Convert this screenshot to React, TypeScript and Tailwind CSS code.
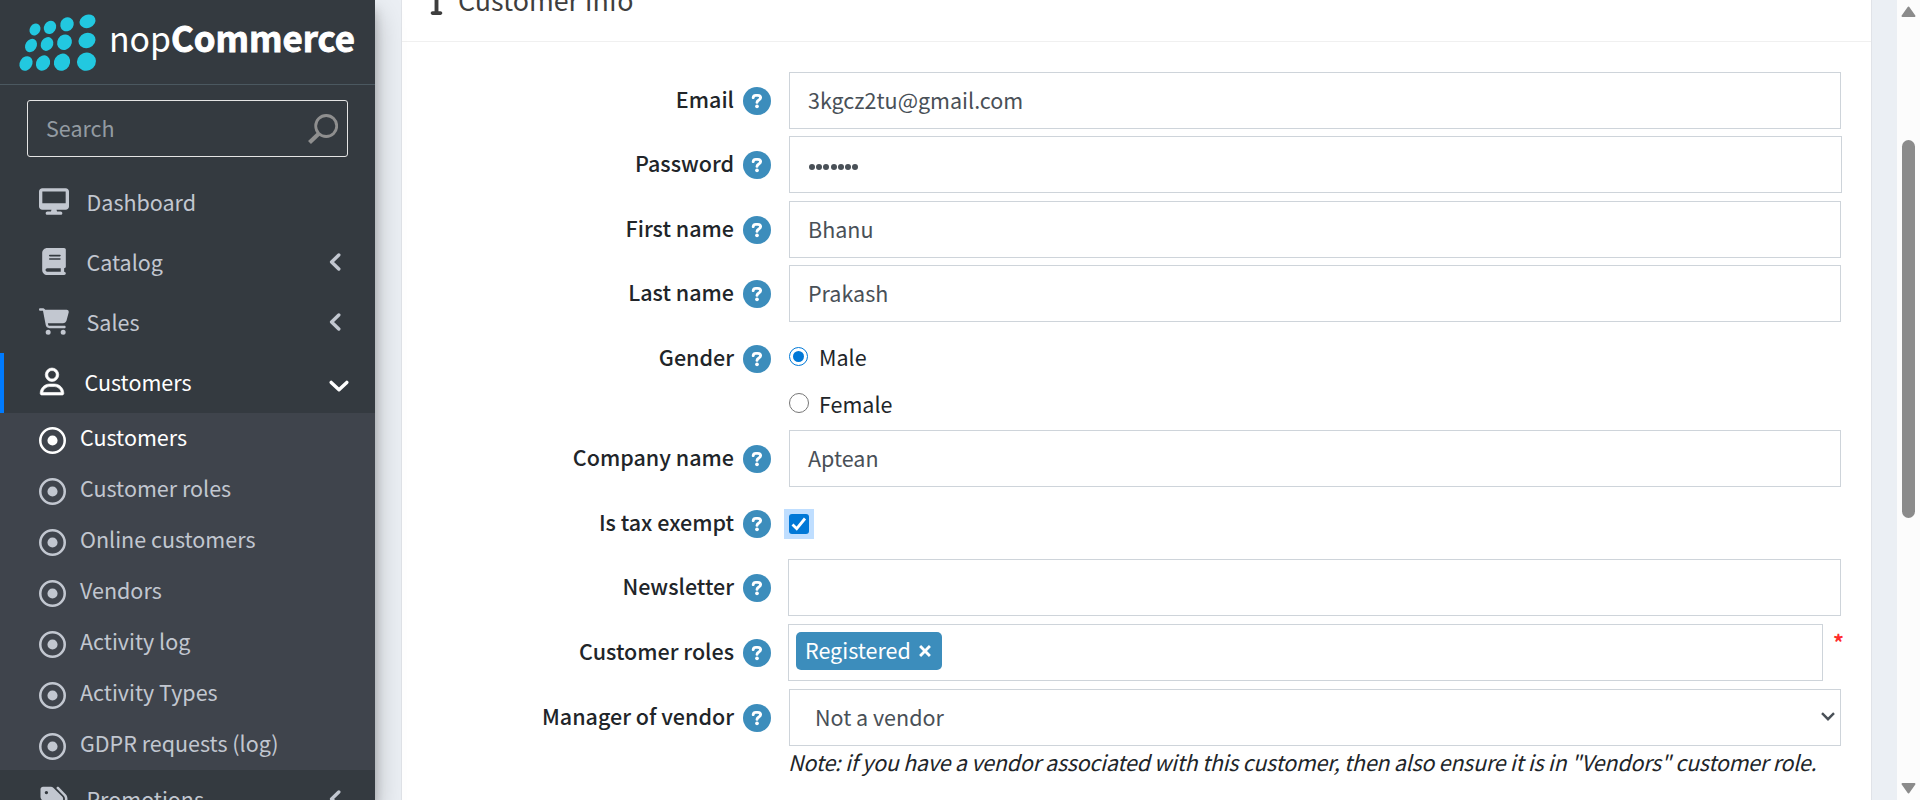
import type { ComponentType, ReactNode } from "react";
import {
  FaBook,
  FaCartShopping,
  FaDesktop,
  FaInfo,
  FaRegCircleDot,
  FaRegUser,
  FaTags,
} from "react-icons/fa6";

type IconType = ComponentType<{ className?: string }>;

const logoDots: [number, number, number, number][] = [
  [35, 29.5, 5.2, 6.3],
  [50, 27.3, 5.9, 6.9],
  [67, 24.3, 6.6, 7.2],
  [87.5, 21.3, 8.2, 6.6],
  [31, 45.5, 5.6, 7],
  [47, 44, 6, 7.2],
  [64.5, 42.3, 7.2, 8],
  [87, 40.5, 8.7, 7.5],
  [26, 63.5, 6.2, 7.6],
  [43, 63, 6.8, 8],
  [62, 62.2, 7.9, 8.8],
  [86.5, 61.7, 9.6, 9],
];

function Logo() {
  return (
    <svg className="block h-[84px] w-[375px]" viewBox="0 0 375 84">
      {logoDots.map(([cx, cy, rx, ry]) => (
        <ellipse
          key={`${cx}-${cy}`}
          cx={cx}
          cy={cy}
          rx={rx}
          ry={ry}
          fill="#22c8e0"
          transform={`rotate(${rx > ry ? -22 : 32} ${cx} ${cy})`}
        />
      ))}
      <text x="109" y="52" fontSize="35" fontWeight="400" fill="#fff" textLength="62" lengthAdjust="spacingAndGlyphs">
        nop
      </text>
      <text x="171" y="52" fontSize="35" fontWeight="700" fill="#fff" textLength="184" lengthAdjust="spacingAndGlyphs" stroke="#fff" strokeWidth="0.9">
        Commerce
      </text>
    </svg>
  );
}

function HelpIcon() {
  return (
    <svg className="h-7 w-7 shrink-0" viewBox="0 0 28 28" fill="none">
      <circle cx="14" cy="14" r="14" fill="#3c8dbc" />
      <path d="M10.2 10.6C10.4 9.1 11.4 8.4 12.8 8.4H14.8C16.5 8.4 17.6 9.4 17.6 10.8C17.6 13 14 13.1 14 15.4" stroke="#fff" strokeWidth="2.9" strokeLinecap="round" />
      <circle cx="14" cy="19.3" r="1.85" fill="#fff" />
    </svg>
  );
}

function NavItem({ icon: Icon, iconClass, label }: { icon: IconType; iconClass: string; label: string }) {
  return (
    <div className="flex h-[60px] shrink-0 items-center pl-[37px] pr-[34px]">
      <span className="flex w-[34px] justify-center">
        <Icon className={iconClass} />
      </span>
      <span className="mb-[3px] ml-[15.5px] flex-1">{label}</span>
      <svg className="mb-[3px] h-[18px] w-3" viewBox="0 0 12 18" fill="none" stroke="currentColor" strokeWidth="3.4" strokeLinecap="round" strokeLinejoin="round">
        <path d="M9.8 2 2.6 9 9.8 16" />
      </svg>
    </div>
  );
}

const subItems = [
  "Customers",
  "Customer roles",
  "Online customers",
  "Vendors",
  "Activity log",
  "Activity Types",
  "GDPR requests (log)",
];

function Sidebar() {
  return (
    <aside className="z-10 flex h-[800px] w-[375px] shrink-0 flex-col overflow-hidden bg-[#343a40] text-[#c2c7d0]">
      <div className="h-[85px] shrink-0 border-b border-[#4b5860]">
        <Logo />
      </div>
      <div className="mx-[27px] mt-[15px] flex h-[57px] shrink-0 items-center rounded-[3px] border border-[#e4e4e4] pl-[18px] pr-[9px] text-[#939ba2]">
        <span className="mb-[2px] flex-1">Search</span>
        <svg className="h-[30px] w-[30px]" viewBox="0 0 30 30" fill="none" stroke="#8f8f8f">
          <circle cx="18.2" cy="12" r="10.5" strokeWidth="2.8" />
          <path d="M1.5 28.5 11 19.5" strokeWidth="4.2" />
        </svg>
      </div>
      <nav className="mt-4 flex flex-col">
        <div className="flex h-[60px] shrink-0 items-center pl-[37px]">
          <span className="flex w-[34px] justify-center">
            <FaDesktop className="mb-1 h-[27px] w-[30px]" />
          </span>
          <span className="mb-[3px] ml-[15.5px]">Dashboard</span>
        </div>
        <NavItem icon={FaBook} iconClass="mb-1 h-[27px] w-[24px]" label="Catalog" />
        <NavItem icon={FaCartShopping} iconClass="mb-1 h-[27px] w-[30px]" label="Sales" />
        <div className="flex h-[60px] shrink-0 items-center border-l-4 border-[#007bff] pl-9 pr-[26px] text-white">
          <FaRegUser className="mb-[3px] h-[27px] w-[24px] overflow-visible stroke-white stroke-[12px]" />
          <span className="mb-[3px] ml-[20.5px] flex-1">Customers</span>
          <svg className="mt-[6px] h-3 w-5" viewBox="0 0 20 12" fill="none" stroke="currentColor" strokeWidth="3.4" strokeLinecap="round" strokeLinejoin="round">
            <path d="M2.2 2.4 10 9.8 17.8 2.4" />
          </svg>
        </div>
        <div className="bg-[#3f444c]">
          {subItems.map((item, i) => (
            <div key={item} className={i === 0 ? "flex h-[51px] items-center pl-[39px] text-white" : "flex h-[51px] items-center pl-[39px]"}>
              <FaRegCircleDot className="mt-[3px] h-[27px] w-[27px]" />
              <span className="mb-[3px] ml-[14px]">{item}</span>
            </div>
          ))}
        </div>
        <NavItem icon={FaTags} iconClass="mb-1 h-[27px] w-[30px]" label="Promotions" />
      </nav>
    </aside>
  );
}

function Field({ label, className, children }: { label: string; className: string; children?: ReactNode }) {
  return (
    <div className={`flex items-start ${className}`}>
      <div className="flex h-[57px] w-[369px] shrink-0 items-center justify-end">
        <span className="mb-[3px] mr-[9px] font-medium text-[#212529]">{label}</span>
        <HelpIcon />
      </div>
      {children}
    </div>
  );
}

function TextBox({ className, children }: { className: string; children?: ReactNode }) {
  return (
    <div className={`flex h-[57px] items-center border border-[#ced4da] text-[#495057] ${className}`}>{children}</div>
  );
}

function CustomerForm() {
  return (
    <div className="flex flex-col pt-[30px]">
      <Field label="Email" className="h-16">
        <TextBox className="ml-[18px] w-[1052px] pb-0.5 pl-[18px]">3kgcz2tu@gmail.com</TextBox>
      </Field>
      <Field label="Password" className="h-[65px]">
        <TextBox className="ml-[18px] w-[1053px] gap-[1.2px] pl-[19px]">
          {[0, 1, 2, 3, 4, 5, 6].map((n) => (
            <span key={n} className="mt-1 h-[6px] w-[6px] rounded-full bg-[#495057]" />
          ))}
        </TextBox>
      </Field>
      <Field label="First name" className="h-16">
        <TextBox className="ml-[18px] w-[1052px] pb-0.5 pl-[18px]">Bhanu</TextBox>
      </Field>
      <Field label="Last name" className="h-[65px]">
        <TextBox className="ml-[18px] w-[1052px] pb-0.5 pl-[18px]">Prakash</TextBox>
      </Field>
      <Field label="Gender" className="h-[100px]">
        <div className="ml-[18px] flex flex-col text-[#212529]">
          <label className="flex h-[57px] items-center">
            <span className="mb-[4px] flex h-[19px] w-[19px] items-center justify-center rounded-full border-[1.5px] border-[#0078d7]">
              <span className="h-[11px] w-[11px] rounded-full bg-[#0078d7]" />
            </span>
            <span className="mb-[3px] ml-[11px]">Male</span>
          </label>
          <label className="-mt-[5px] flex h-[46px] items-center">
            <span className="mb-[4px] h-[20px] w-[20px] rounded-full border border-[#767676]" />
            <span className="mb-0.5 ml-[10px]">Female</span>
          </label>
        </div>
      </Field>
      <Field label="Company name" className="h-[65px]">
        <TextBox className="ml-[18px] w-[1052px] pb-0.5 pl-[18px]">Aptean</TextBox>
      </Field>
      <Field label="Is tax exempt" className="h-16">
        <div className="ml-[13px] mt-[14px] flex h-[30px] w-[30px] items-center justify-center bg-[#bfdeff]">
          <span className="flex h-5 w-5 items-center justify-center rounded-[3px] bg-[#0078d7]">
            <svg className="h-5 w-5" viewBox="0 0 20 20" fill="none" stroke="#fff" strokeWidth="2.8">
              <path d="M3.5 10.5 7.7 14.7 16 4.5" />
            </svg>
          </span>
        </div>
      </Field>
      <Field label="Newsletter" className="h-[65px]">
        <TextBox className="ml-[17px] w-[1053px]" />
      </Field>
      <Field label="Customer roles" className="h-[65px]">
        <TextBox className="ml-[17px] w-[1035px] pl-[7px]">
          <span className="mb-[3px] flex h-[38px] w-[146px] items-center rounded-[5px] bg-[#3c8dbc] pb-0.5 pl-[9px] text-white">
            Registered
            <svg className="ml-[8px] mt-0.5 h-[12px] w-[12px]" viewBox="0 0 11 11" stroke="#fff" strokeWidth="2.6">
              <path d="M1 1 10 10M10 1 1 10" />
            </svg>
          </span>
        </TextBox>
        <span className="ml-[10px] font-bold text-[#ff2b2b]">*</span>
      </Field>
      <Field label="Manager of vendor" className="h-[57px]">
        <TextBox className="ml-[18px] w-[1052px] justify-between pb-0.5 pl-[25px] pr-[5px]">
          Not a vendor
          <svg className="h-[9px] w-[14px]" viewBox="0 0 14 9" fill="none" stroke="#495057" strokeWidth="2.4">
            <path d="M1 1.2 7 7.2 13 1.2" />
          </svg>
        </TextBox>
      </Field>
      <div className="-mt-0.5 ml-[386px] whitespace-nowrap italic tracking-[-0.255px] text-[#212529]">
        Note: if you have a vendor associated with this customer, then also ensure it is in "Vendors" customer role.
      </div>
    </div>
  );
}

function Scrollbar() {
  return (
    <div className="flex h-[800px] w-[23px] shrink-0 flex-col items-center bg-[#fcfcfc] pt-[6px]">
      <svg className="h-3 w-[15px]" viewBox="0 0 15 12" fill="#8b8b8b" stroke="#8b8b8b" strokeWidth="2" strokeLinejoin="round">
        <path d="M7.5 1.5 13.5 10H1.5Z" />
      </svg>
      <div className="mt-[122px] h-[378px] w-[13px] rounded-full bg-[#8b8b8b]" />
      <svg className="mt-[264px] h-3 w-[15px]" viewBox="0 0 15 12" fill="#8b8b8b" stroke="#8b8b8b" strokeWidth="2" strokeLinejoin="round">
        <path d="M7.5 10.5 13.5 2H1.5Z" />
      </svg>
    </div>
  );
}

export default function App() {
  return (
    <div className="flex h-[800px] w-[1920px] overflow-hidden bg-[#ebeff4] font-['Noto_Sans_CJK_SC','Noto_Sans',sans-serif] text-[21.5px] leading-[36px]">
      <div className="z-10 shadow-[0_14px_28px_rgba(0,0,0,0.25),0_10px_10px_rgba(0,0,0,0.22)]">
        <Sidebar />
      </div>
      <main className="flex h-[800px] flex-1 flex-col pl-[26px]">
        <section className="h-[800px] w-[1471px] overflow-hidden border-x border-[#e0e3e8] bg-white">
          <div className="flex h-[42px] items-start border-b border-[#f0f0f0] text-[#3e3e3e]">
            <FaInfo className="-mt-4 ml-[27px] h-[31px] w-[15px]" />
            <span className="-mt-[18px] ml-[14px] text-[26.8px]">Customer info</span>
          </div>
          <CustomerForm />
        </section>
      </main>
      <Scrollbar />
    </div>
  );
}
